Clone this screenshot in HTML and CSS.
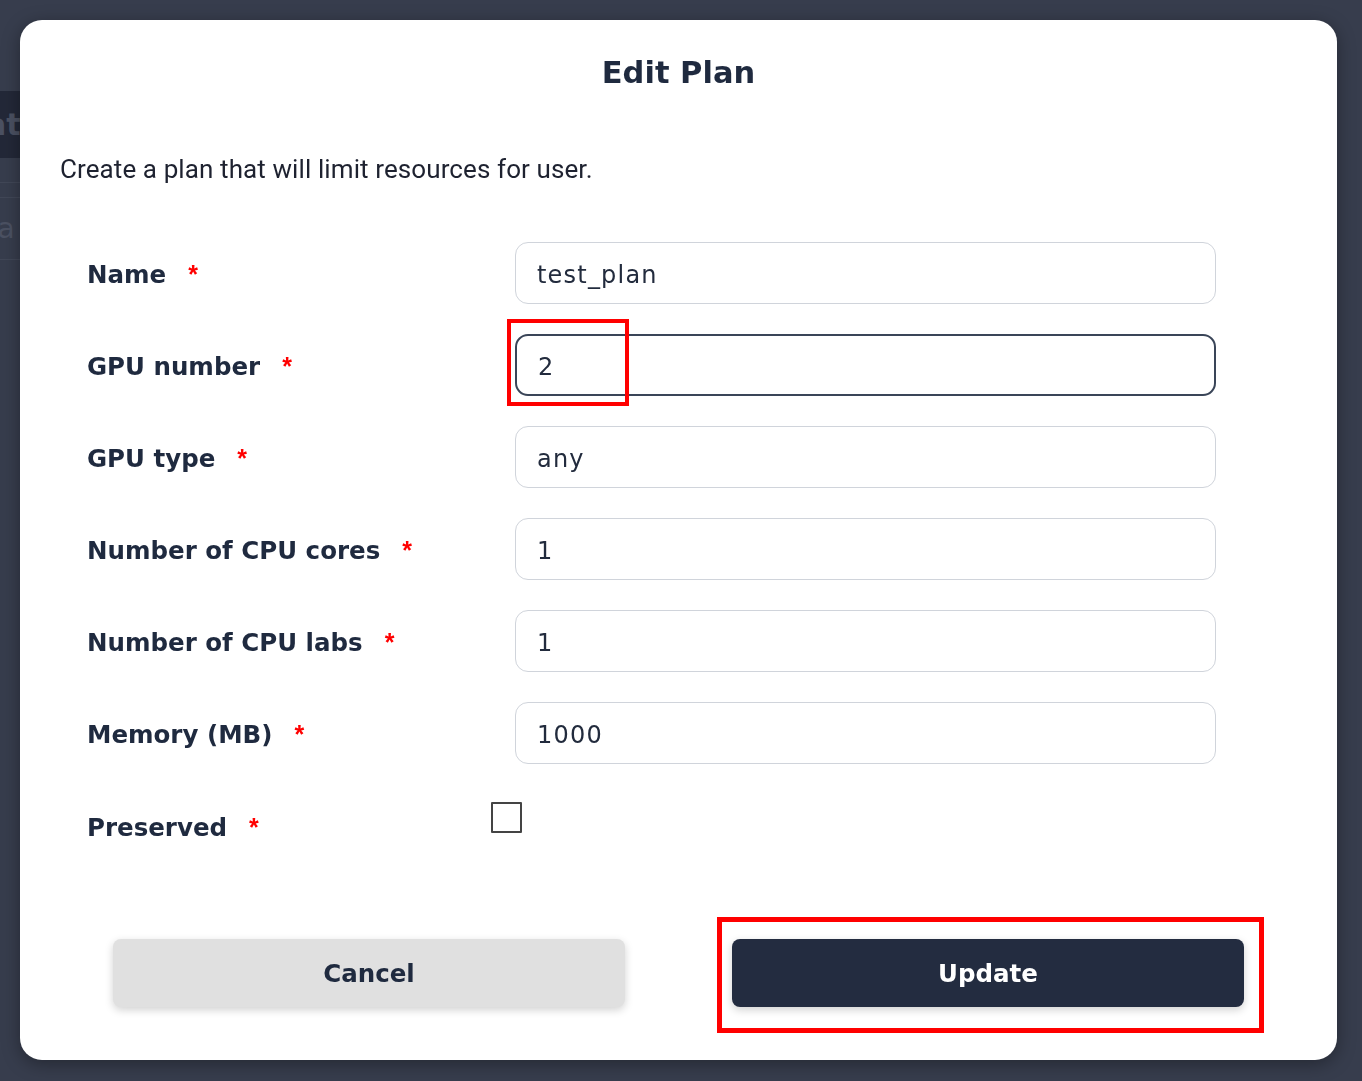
FILE: index.html
```html
<!DOCTYPE html>
<html lang="en">
<head>
<meta charset="utf-8">
<title>Edit Plan</title>
<link rel="stylesheet" href="styles.css">
</head>
<body>
<div class="page">
  <div class="page-gap"></div>
  <div class="page-header"><span class="page-title">Stat</span></div>
  <div class="page-line"></div>
  <div class="page-line second"></div>
  <div class="page-row"><span class="page-cell">Da</span></div>
</div>

<div class="overlay">
  <div class="modal">
    <h1 class="modal-title">Edit Plan</h1>
    <p class="modal-desc">Create a plan that will limit resources for user.</p>

    <form class="form">
      <div class="row">
        <label class="label">Name <span class="req">*</span></label>
        <div class="field"><input class="input" type="text" value="test_plan"></div>
      </div>
      <div class="row">
        <label class="label">GPU number <span class="req">*</span></label>
        <div class="field">
          <input class="input focused" type="text" value="2">
          <span class="mark mark-gpu"></span>
        </div>
      </div>
      <div class="row">
        <label class="label">GPU type <span class="req">*</span></label>
        <div class="field"><input class="input" type="text" value="any"></div>
      </div>
      <div class="row">
        <label class="label">Number of CPU cores <span class="req">*</span></label>
        <div class="field"><input class="input" type="text" value="1"></div>
      </div>
      <div class="row">
        <label class="label">Number of CPU labs <span class="req">*</span></label>
        <div class="field"><input class="input" type="text" value="1"></div>
      </div>
      <div class="row">
        <label class="label">Memory (MB) <span class="req">*</span></label>
        <div class="field"><input class="input" type="text" value="1000"></div>
      </div>
      <div class="row row-check">
        <label class="label">Preserved <span class="req">*</span></label>
        <div class="field"><span class="checkbox"></span></div>
      </div>
    </form>

    <div class="actions">
      <button class="btn btn-cancel" type="button">Cancel</button>
      <div class="btn-wrap">
        <button class="btn btn-update" type="button">Update</button>
        <span class="mark mark-update"></span>
      </div>
    </div>
  </div>
</div>
</body>
</html>
```

FILE: styles.css
```css
* { box-sizing: border-box; }

html, body {
  margin: 0;
  padding: 0;
  height: 100%;
}

body {
  background: #373d4d;
  font-family: "DejaVu Sans", "Liberation Sans", sans-serif;
  overflow: hidden;
}

/* background page (dimmed under the overlay) */
.page {
  width: 300px;
  display: flex;
  flex-direction: column;
}
.page-gap { height: 91px; }
.page-header {
  height: 67px;
  background: #232838;
  display: flex;
  align-items: center;
}
.page-title {
  color: #4b5162;
  font-weight: 700;
  font-size: 30px;
  margin-left: -50px;
}
.page-line {
  height: 1px;
  background: #414757;
  margin-top: 24px;
}
.page-line.second { margin-top: 14px; }
.page-row {
  height: 62px;
  border-bottom: 1px solid #414757;
  display: flex;
  align-items: center;
}
.page-cell {
  color: #4b5162;
  font-size: 28px;
  margin-left: -24px;
}

/* overlay + modal */
.overlay {
  position: fixed;
  inset: 0;
  padding: 20px 25px 21px 20px;
  display: flex;
}
.modal {
  flex: 1;
  background: #ffffff;
  border-radius: 22px;
  box-shadow: 0 4px 18px rgba(0, 0, 0, 0.35);
  padding: 33px 40px 0 40px;
  display: flex;
  flex-direction: column;
}

.modal-title {
  margin: 0;
  text-align: center;
  font-family: "DejaVu Sans", sans-serif;
  font-weight: 700;
  font-size: 30.5px;
  line-height: 40px;
  color: #1f2a3f;
}

.modal-desc {
  margin: 61px 0 0 0;
  font-family: Roboto, "Liberation Sans", sans-serif;
  font-size: 26px;
  line-height: 30px;
  letter-spacing: 0.1px;
  color: #1e2230;
}

.form {
  margin-top: 58px;
  padding-left: 27px;
  display: flex;
  flex-direction: column;
  gap: 30px;
}

.row {
  display: flex;
  align-items: center;
  height: 62px;
}

.label {
  width: 428px;
  flex: none;
  padding-top: 4px;
  font-family: "DejaVu Sans", sans-serif;
  font-weight: 700;
  font-size: 24.5px;
  line-height: 30px;
  color: #1f2a3f;
  display: flex;
  align-items: flex-start;
}

.req {
  color: #ff0000;
  font-family: "Liberation Sans", sans-serif;
  font-weight: 700;
  font-size: 25px;
  line-height: 20px;
  margin-left: 22px;
  margin-top: 4px;
}

.field {
  position: relative;
  width: 701px;
  height: 62px;
}

.input {
  width: 100%;
  height: 100%;
  border: 1.5px solid #d0d4db;
  border-radius: 13px;
  padding: 3px 0 0 21px;
  font-family: "DejaVu Sans", sans-serif;
  font-weight: 400;
  font-size: 24px;
  letter-spacing: 1.2px;
  color: #222b3d;
  background: #fff;
  outline: none;
}
.input.focused {
  border: 2px solid #3a4558;
}

.row-check .label { padding-top: 6px; }
.row-check .field {
  display: flex;
  align-items: flex-start;
}
.checkbox {
  display: block;
  width: 31px;
  height: 31px;
  border: 2px solid #444;
  border-radius: 1px;
  margin-left: -24px;
  margin-top: 8px;
  background: #fff;
}

/* red annotation boxes */
.mark {
  position: absolute;
  border: 4px solid #ff0000;
  pointer-events: none;
}
.mark-gpu {
  left: -8px;
  top: -15px;
  width: 122px;
  height: 87px;
}
.mark-update {
  left: -15px;
  top: -22px;
  width: 547px;
  height: 116px;
  border-width: 5px;
}

.actions {
  margin-top: 83px;
  display: flex;
  justify-content: center;
  gap: 107px;
}

.btn-wrap { position: relative; }

.btn {
  width: 512px;
  height: 68px;
  border: none;
  border-radius: 8px;
  font-family: "DejaVu Sans", sans-serif;
  font-weight: 700;
  font-size: 24.5px;
  cursor: pointer;
  box-shadow: 0 3px 8px rgba(0, 0, 0, 0.18);
}
.btn-cancel {
  background: #e0e0e0;
  color: #1f2a3f;
}
.btn-update {
  background: #232c40;
  color: #ffffff;
}
```
